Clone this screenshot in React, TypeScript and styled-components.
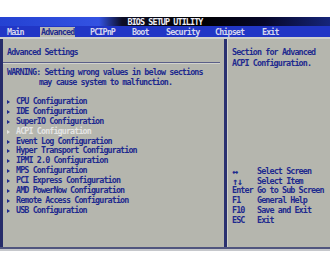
import { Fragment } from "react";
import styled, { createGlobalStyle } from "styled-components";

const GlobalStyle = createGlobalStyle`
  html, body {
    margin: 0;
    padding: 0;
    background: #ffffff;
  }
  body {
    font-family: "DejaVu Sans Mono", "Liberation Mono", monospace;
    font-weight: bold;
    font-size: 8.4px;
    letter-spacing: -0.88px;
  }
`;

const Screen = styled.div`
  width: 330px;
  padding-top: 17px;
  overflow: hidden;
`;

const TitleBar = styled.div`
  height: 9px;
  line-height: 10px;
  text-align: center;
  color: #eeeef4;
  background: linear-gradient(
    90deg,
    #2442d2 0%,
    #3352e2 30%,
    #0c0d26 37%,
    #000000 60%,
    #06072a 80%,
    #16257a 100%
  );
`;

const MenuBar = styled.div`
  display: grid;
  grid-template-columns: 33px 50px 42px 34px 49px 47px auto;
  align-items: center;
  height: 11px;
  padding-left: 7px;
  background: #2136c6;
`;

const MenuItem = styled.span<{ $active?: boolean }>`
  justify-self: start;
  height: 10px;
  line-height: 10px;
  margin-top: 1px;
  padding: ${(p) => (p.$active ? "0 1px" : "0")};
  color: ${(p) => (p.$active ? "#1e2a8e" : "#d6d6ee")};
  background: ${(p) => (p.$active ? "#b7b8b0" : "transparent")};
`;

const Frame = styled.div`
  border-bottom: 2px solid #c6c8cc;
`;

const Body = styled.div`
  display: flex;
  height: 208px;
  background: #b5b6ae;
  border-top: 2px solid #cfd0cc;
  border-bottom: 2px solid #50557e;
  color: #1e2a8e;
`;

const LeftPanel = styled.div`
  width: 221px;
  border-left: 3px solid #262c6a;
  padding-top: 8px;
  line-height: 10px;
`;

const Heading = styled.div`
  padding-left: 4px;
`;

const Separator = styled.div`
  height: 1px;
  margin: 5px 4px 4px 0;
  background: #5b5f88;
  box-shadow: 0 1px 0 #d2d3cc;
`;

const Warning = styled.div`
  padding-left: 4px;
  white-space: pre;
`;

const WarningCont = styled.div`
  padding-left: 36px;
  white-space: pre;
`;

const List = styled.ul`
  list-style: none;
  margin: 10px 0 0;
  padding: 0 0 0 4px;
  line-height: 9.9px;
`;

const ListItem = styled.li<{ $selected?: boolean }>`
  display: flex;
  align-items: center;
  height: 9.9px;
  color: ${(p) => (p.$selected ? "#e4e4e4" : "#1e2a8e")};
`;

const Marker = styled.span<{ $selected?: boolean }>`
  width: 0;
  height: 0;
  margin-right: 6px;
  border-left: 3px solid ${(p) => (p.$selected ? "#e4e4e4" : "#1e2a8e")};
  border-top: 2.5px solid transparent;
  border-bottom: 2.5px solid transparent;
`;

const RightPanel = styled.div`
  flex: 1;
  display: flex;
  flex-direction: column;
  border-left: 3px solid #2a3070;
  box-shadow: inset 1px 0 0 #d0d1ca;
  padding: 8px 0 21px 5px;
`;

const Help = styled.div`
  line-height: 11px;
`;

const Keys = styled.div`
  margin-top: auto;
  display: grid;
  grid-template-columns: 25px auto;
  grid-auto-rows: 9.9px;
  line-height: 9.9px;
`;

const KeyName = styled.span<{ $glyph?: boolean }>`
  font-size: ${(p) => (p.$glyph ? "10px" : "inherit")};
  letter-spacing: ${(p) => (p.$glyph ? "-1.2px" : "inherit")};
`;

const menu = ["Main", "Advanced", "PCIPnP", "Boot", "Security", "Chipset", "Exit"];

const items = [
  "CPU Configuration",
  "IDE Configuration",
  "SuperIO Configuration",
  "ACPI Configuration",
  "Event Log Configuration",
  "Hyper Transport Configuration",
  "IPMI 2.0 Configuration",
  "MPS Configuration",
  "PCI Express Configuration",
  "AMD PowerNow Configuration",
  "Remote Access Configuration",
  "USB Configuration",
];

const keys: [string, string, boolean][] = [
  ["↔", "Select Screen", true],
  ["↑↓", "Select Item", true],
  ["Enter", "Go to Sub Screen", false],
  ["F1", "General Help", false],
  ["F10", "Save and Exit", false],
  ["ESC", "Exit", false],
];

function App() {
  return (
    <>
      <GlobalStyle />
      <Screen>
        <TitleBar>BIOS SETUP UTILITY</TitleBar>
        <MenuBar>
          {menu.map((m) => (
            <MenuItem key={m} $active={m === "Advanced"}>
              {m}
            </MenuItem>
          ))}
        </MenuBar>
        <Frame>
          <Body>
            <LeftPanel>
              <Heading>Advanced Settings</Heading>
              <Separator />
              <Warning>WARNING: Setting wrong values in below sections</Warning>
              <WarningCont>may cause system to malfunction.</WarningCont>
              <List>
                {items.map((it) => (
                  <ListItem key={it} $selected={it === "ACPI Configuration"}>
                    <Marker $selected={it === "ACPI Configuration"} />
                    {it}
                  </ListItem>
                ))}
              </List>
            </LeftPanel>
            <RightPanel>
              <Help>
                Section for Advanced
                <br />
                ACPI Configuration.
              </Help>
              <Keys>
                {keys.map(([k, d, glyph]) => (
                  <Fragment key={k}>
                    <KeyName $glyph={glyph}>{k}</KeyName>
                    <span>{d}</span>
                  </Fragment>
                ))}
              </Keys>
            </RightPanel>
          </Body>
        </Frame>
      </Screen>
    </>
  );
}

export default App;
